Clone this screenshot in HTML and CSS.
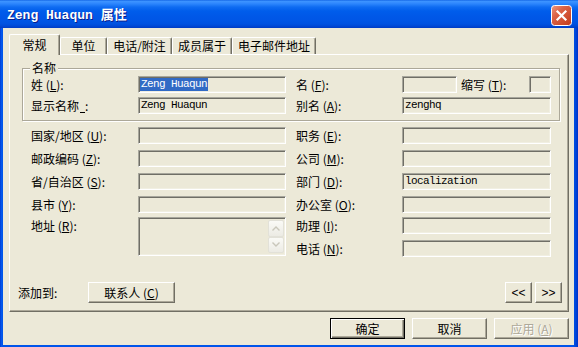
FILE: index.html
```html
<!DOCTYPE html>
<html>
<head>
<meta charset="utf-8">
<title>Zeng Huaqun 属性</title>
<link rel="stylesheet" href="styles.css">
</head>
<body>
<div class="window">
  <div class="titlebar">
    <span class="title"><span class="title-latin">Zeng Huaqun </span>属性</span>
    <span class="close">
      <svg width="21" height="21" viewBox="0 0 21 21">
        <defs>
          <linearGradient id="cg" x1="0" y1="0" x2="1" y2="1">
            <stop offset="0" stop-color="#EE9A80"/>
            <stop offset="0.35" stop-color="#DC6346"/>
            <stop offset="1" stop-color="#C23A1B"/>
          </linearGradient>
        </defs>
        <rect x="0.5" y="0.5" width="20" height="20" rx="3" fill="url(#cg)" stroke="#fff"/>
        <path d="M6.5 6.5 L14.5 14.5 M14.5 6.5 L6.5 14.5" stroke="#fff" stroke-width="2.2" stroke-linecap="square"/>
      </svg>
    </span>
  </div>
  <div class="client">
    <div class="tabs">
      <div class="tab active w51">常规</div>
      <div class="tab w47">单位</div>
      <div class="tab w65">电话/附注</div>
      <div class="tab w60">成员属于</div>
      <div class="tab w84">电子邮件地址</div>
    </div>
    <div class="panel">
      <div class="group">
        <span class="legend">名称</span>
        <div class="name-grid">
          <span class="lbl">姓 (<u>L</u>):</span>
          <div class="field"><span class="sel">Zeng Huaqun</span></div>
          <span></span>
          <span class="lbl">名 (<u>F</u>):</span>
          <div class="field"></div>
          <span></span>
          <span class="lbl">缩写 (<u>T</u>):</span>
          <div class="field"></div>

          <span class="lbl">显示名称<span class="ul-blank"></span>:</span>
          <div class="field">Zeng Huaqun</div>
          <span></span>
          <span class="lbl">别名 (<u>A</u>):</span>
          <div class="field span-right">zenghq</div>
        </div>
      </div>

      <div class="info-grid">
        <span class="lbl r1 c1">国家/地区 (<u>U</u>):</span>
        <div class="field r1 c2"></div>
        <span class="lbl r1 c4">职务 (<u>E</u>):</span>
        <div class="field r1 c5"></div>

        <span class="lbl r2 c1">邮政编码 (<u>Z</u>):</span>
        <div class="field r2 c2"></div>
        <span class="lbl r2 c4">公司 (<u>M</u>):</span>
        <div class="field r2 c5"></div>

        <span class="lbl r3 c1">省/自治区 (<u>S</u>):</span>
        <div class="field r3 c2"></div>
        <span class="lbl r3 c4">部门 (<u>D</u>):</span>
        <div class="field r3 c5">localization</div>

        <span class="lbl r4 c1">县市 (<u>Y</u>):</span>
        <div class="field r4 c2"></div>
        <span class="lbl r4 c4">办公室 (<u>O</u>):</span>
        <div class="field r4 c5"></div>

        <span class="lbl r5 c1">地址 (<u>R</u>):</span>
        <div class="field addr">
          <div class="sb">
            <span class="sbtn"><svg width="8" height="5" viewBox="0 0 8 5"><path d="M0.5 4.5 L4 1 L7.5 4.5" fill="none" stroke="#C9C7BA" stroke-width="1.4"/></svg></span>
            <span class="sbtn"><svg width="8" height="5" viewBox="0 0 8 5"><path d="M0.5 0.5 L4 4 L7.5 0.5" fill="none" stroke="#C9C7BA" stroke-width="1.4"/></svg></span>
          </div>
        </div>
        <span class="lbl r5 c4">助理 (<u>I</u>):</span>
        <div class="field r5 c5"></div>

        <span class="lbl r6 c4">电话 (<u>N</u>):</span>
        <div class="field r6 c5"></div>
      </div>

      <div class="addrow">
        <span class="add-lbl">添加到:</span>
        <div class="btn contact">联系人 (<u>C</u>)</div>
        <div class="nav">
          <div class="btn arrow">&lt;&lt;</div>
          <div class="btn arrow">&gt;&gt;</div>
        </div>
      </div>
    </div>
    <div class="dlg-buttons">
      <div class="btn dlg default">确定</div>
      <div class="btn dlg">取消</div>
      <div class="btn dlg disabled">应用 (<u>A</u>)</div>
    </div>
  </div>
</div>
</body>
</html>
```

FILE: styles.css
```css
* { box-sizing: border-box; }
html, body { margin: 0; padding: 0; }
body {
  width: 578px;
  height: 347px;
  overflow: hidden;
  background: #ECE9D8;
  font-family: "Noto Sans CJK SC", "Noto Sans", sans-serif;
  font-size: 12px;
  color: #000;
}
u { text-decoration: underline; text-underline-offset: 1px; }

.window {
  width: 578px;
  height: 347px;
  display: flex;
  flex-direction: column;
  padding-bottom: 2px;
  background: linear-gradient(to right, #0031C8 0, #0558ED 1px, #0055EA 3px, #0055EA 573px, #0045D8 576px, #0031C8 578px);
}

.titlebar {
  height: 28px;
  flex: none;
  display: flex;
  align-items: center;
  justify-content: space-between;
  padding: 0 6px 0 7px;
  background: linear-gradient(to bottom, #0A5AE0 0, #3D95FF 1px, #3A90FF 2px, #2A84FC 4px, #0F6CF2 7px, #005DEB 11px, #0058E8 16px, #0055E5 21px, #0052E0 24px, #0049D6 26px, #003CC4 28px);
  color: #fff;
}
.title {
  font-family: "Noto Sans CJK SC", sans-serif;
  font-weight: bold;
  font-size: 13px;
  line-height: 16px;
  text-shadow: 1px 1px 0 #0A1E8C;
  margin-top: 1px;
}
.title-latin {
  font-family: "Liberation Mono", monospace;
  font-weight: bold;
  font-size: 13px;
}
.close { display: flex; margin-top: 3px; }

.client {
  flex: 1;
  margin: 0 4px 0 3px;
  background: #ECE9D8;
  display: flex;
  flex-direction: column;
}

/* tabs */
.tabs {
  height: 26px;
  flex: none;
  display: flex;
  align-items: flex-end;
  padding-left: 6px;
  position: relative;
  z-index: 1;
}
.tab {
  height: 17px;
  display: flex;
  align-items: center;
  justify-content: center;
  border-top: 1px solid #fff;
  border-left: 1px solid #fff;
  border-right: 1px solid #716F64;
  box-shadow: inset -1px 0 0 #ACA899;
  border-radius: 2px 2px 0 0;
  line-height: 14px;
  white-space: nowrap;
}
.tab.active {
  height: 21px;
  margin-bottom: -1px;
  background: #ECE9D8;
  padding-bottom: 1px;
}
.w51 { width: 51px; }
.w47 { width: 47px; }
.w65 { width: 65px; }
.w60 { width: 60px; }
.w84 { width: 84px; }

/* panel */
.panel {
  flex: none;
  height: 258px;
  margin: 0 5px 0 6px;
  border: 1px solid;
  border-color: #fff #716F64 #716F64 #fff;
  box-shadow: inset -1px -1px 0 #ACA899;
  display: flex;
  flex-direction: column;
}

.group {
  position: relative;
  margin: 13px 0 0 12px;
  width: 538px;
  height: 53px;
  border: 1px solid #ACA899;
  box-shadow: inset 1px 1px 0 #fff, 1px 1px 0 #fff;
  padding: 7px 0 0 8px;
}
.legend {
  position: absolute;
  left: 7px;
  top: -8px;
  padding: 0 2px;
  background: #ECE9D8;
  line-height: 14px;
}

.lbl {
  line-height: 17px;
  height: 17px;
  white-space: nowrap;
}
.ul-blank {
  display: inline-block;
  width: 5px;
  height: 1px;
  border-bottom: 1px solid #000;
  vertical-align: -2px;
  margin-left: 1px;
}

.name-grid {
  display: grid;
  grid-template-columns: 107px 148px 10px 106px 55px 4px 68px 22px;
  grid-auto-rows: 17px;
  row-gap: 4px;
}
.span-right { grid-column: 5 / 9; }

.field {
  height: 17px;
  border: 1px solid;
  border-color: #A7A69C #fff #fff #A7A69C;
  box-shadow: inset 1px 1px 0 #6F6E66, inset -1px -1px 0 #F1EFE2;
  background: #ECE9D8;
  font-family: "Liberation Mono", monospace;
  font-size: 11px;
  letter-spacing: -0.6px;
  line-height: 13px;
  padding: 1px 0 0 2px;
  white-space: nowrap;
  overflow: hidden;
}
.sel {
  background: #316AC5;
  color: #fff;
  display: inline-block;
  padding-right: 1px;
  margin-left: -1px;
  padding-left: 1px;
}

.info-grid {
  display: grid;
  margin: 6px 0 0 21px;
  grid-template-columns: 107px 148px 10px 106px 149px;
  grid-template-rows: 23px 23px 23px 21px 23px 17px;
  align-items: start;
}
.r1 { grid-row: 1; } .r2 { grid-row: 2; } .r3 { grid-row: 3; }
.r4 { grid-row: 4; } .r5 { grid-row: 5; } .r6 { grid-row: 6; }
.c1 { grid-column: 1; } .c2 { grid-column: 2; } .c4 { grid-column: 4; } .c5 { grid-column: 5; }

.addr {
  grid-row: 5 / 7;
  grid-column: 2;
  height: 39px;
  display: flex;
  justify-content: flex-end;
  padding: 2px 1px 2px 0;
}
.sb { display: flex; flex-direction: column; width: 16px; }
.sbtn {
  height: 17px;
  display: flex;
  align-items: center;
  justify-content: center;
  background: linear-gradient(to bottom, #FAFAF6, #ECEBE4);
  border: 1px solid #E2E1D8;
  border-radius: 2px;
}

.addrow {
  display: flex;
  align-items: center;
  margin: 25px 6px 0 8px;
  height: 21px;
}
.add-lbl { width: 70px; }
.nav { margin-left: auto; display: flex; gap: 3px; }

.btn {
  height: 21px;
  display: flex;
  align-items: center;
  justify-content: center;
  border: 1px solid;
  border-color: #fff #716F64 #716F64 #fff;
  box-shadow: inset -1px -1px 0 #ACA899;
  background: #ECE9D8;
  line-height: 14px;
  white-space: nowrap;
}
.contact { width: 87px; }
.arrow {
  width: 27px;
  font-family: "Liberation Sans", sans-serif;
  font-size: 12px;
  letter-spacing: 0;
}

.dlg-buttons {
  display: flex;
  justify-content: flex-end;
  gap: 7px;
  margin: 6px 5px 0 0;
}
.dlg { width: 75px; }
.btn.default {
  border: 1px solid #000;
  box-shadow: inset 1px 1px 0 #fff, inset -1px -1px 0 #716F64, inset -2px -2px 0 #ACA899;
}
.btn.disabled {
  color: #ACA899;
  text-shadow: 1px 1px 0 #fff;
}
```
